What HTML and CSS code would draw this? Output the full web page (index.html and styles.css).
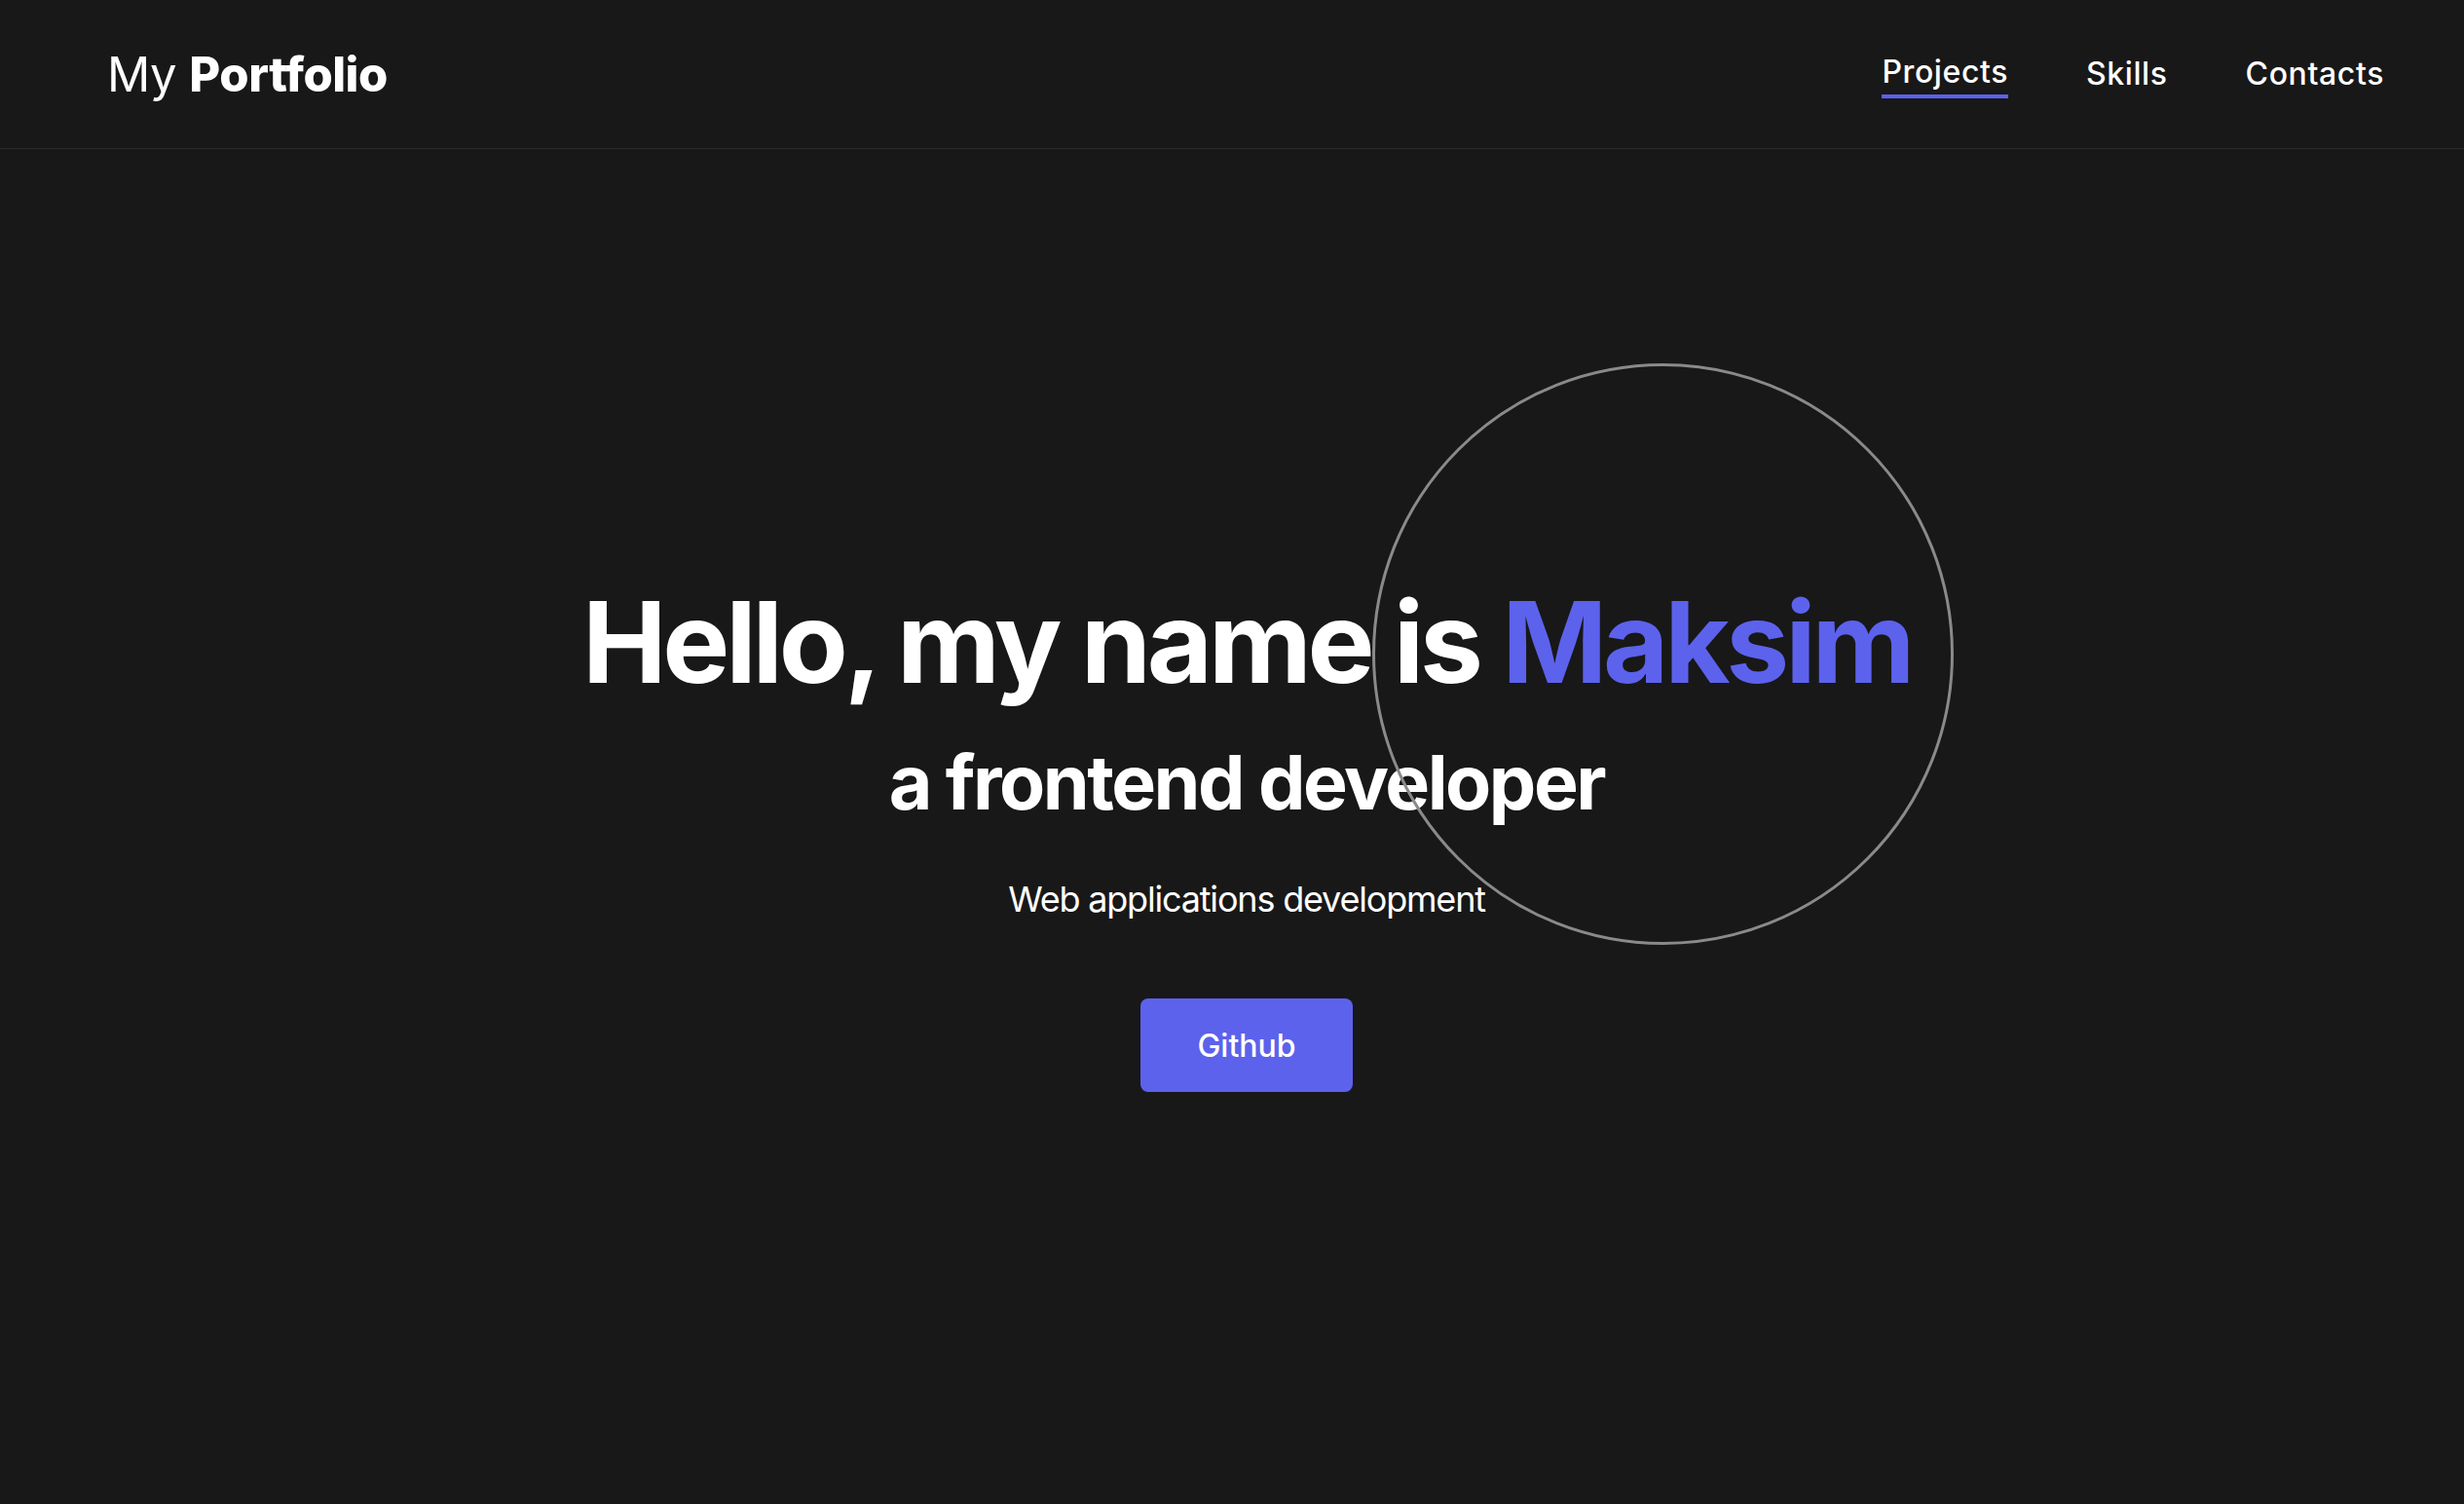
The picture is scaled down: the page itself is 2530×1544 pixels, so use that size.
FILE: index.html
```html
<!DOCTYPE html>
<html lang="en">
<head>
<meta charset="utf-8">
<title>My Portfolio</title>
<link rel="stylesheet" href="styles.css">
</head>
<body>
<header class="header">
  <a class="logo" href="#">My <b>Portfolio</b></a>
  <nav class="nav">
    <a class="nav-link active" href="#">Projects</a>
    <a class="nav-link" href="#">Skills</a>
    <a class="nav-link" href="#">Contacts</a>
  </nav>
</header>
<main class="hero">
  <h1 class="title">Hello, my name is <span class="accent">Maksim</span></h1>
  <h2 class="subtitle">a frontend developer</h2>
  <p class="lead">Web applications development</p>
  <a class="btn" href="#">Github</a>
</main>
<div class="cursor-circle"></div>
</body>
</html>
```
FILE: styles.css
```css
* { box-sizing: border-box; }
html, body { margin: 0; padding: 0; }
body {
  background: #181818;
  color: #ffffff;
  font-family: Inter, "Liberation Sans", sans-serif;
  min-height: 1544px;
  overflow: hidden;
}
a { color: inherit; text-decoration: none; }

.header {
  display: flex;
  align-items: center;
  justify-content: space-between;
  height: 153px;
  padding: 0 82px 0 110px;
  border-bottom: 1px solid #2a2b2e;
}
.logo {
  font-size: 49px;
  font-weight: 400;
  letter-spacing: -0.5px;
  line-height: 1;
}
.logo b { font-weight: 800; }
.nav {
  display: flex;
  gap: 80px;
  align-items: center;
  padding-top: 5px;
}
.nav-link {
  font-size: 32px;
  font-weight: 500;
  letter-spacing: 0.6px;
  line-height: 1;
  padding: 6px 0 7px;
  border-bottom: 4px solid transparent;
}
.nav-link.active {
  border-bottom-color: #5c62ec;
  margin-top: -4px;
}

.hero {
  min-height: 1391px;
  display: flex;
  flex-direction: column;
  align-items: center;
  justify-content: center;
  text-align: center;
  padding-left: 30px;
  padding-top: 20px;
}
.title {
  margin: 0;
  font-size: 116px;
  font-weight: 700;
  letter-spacing: -0.036em;
  line-height: 1.1;
}
.accent { color: #5c62ec; }
.subtitle {
  margin: 34px 0 0;
  font-size: 77px;
  font-weight: 700;
  letter-spacing: -0.032em;
  line-height: 1.2;
}
.lead {
  margin: 50px 0 0;
  font-size: 36px;
  font-weight: 400;
  letter-spacing: -0.033em;
  line-height: 1.3;
}
.btn {
  margin-top: 79px;
  width: 218px;
  height: 96px;
  display: flex;
  align-items: center;
  justify-content: center;
  background: #5c62ec;
  border-radius: 8px;
  font-size: 32px;
  font-weight: 500;
}

.cursor-circle {
  position: absolute;
  left: 1409px;
  top: 373px;
  width: 597px;
  height: 597px;
  border: 3px solid #8a8a8a;
  border-radius: 50%;
  pointer-events: none;
}
```
